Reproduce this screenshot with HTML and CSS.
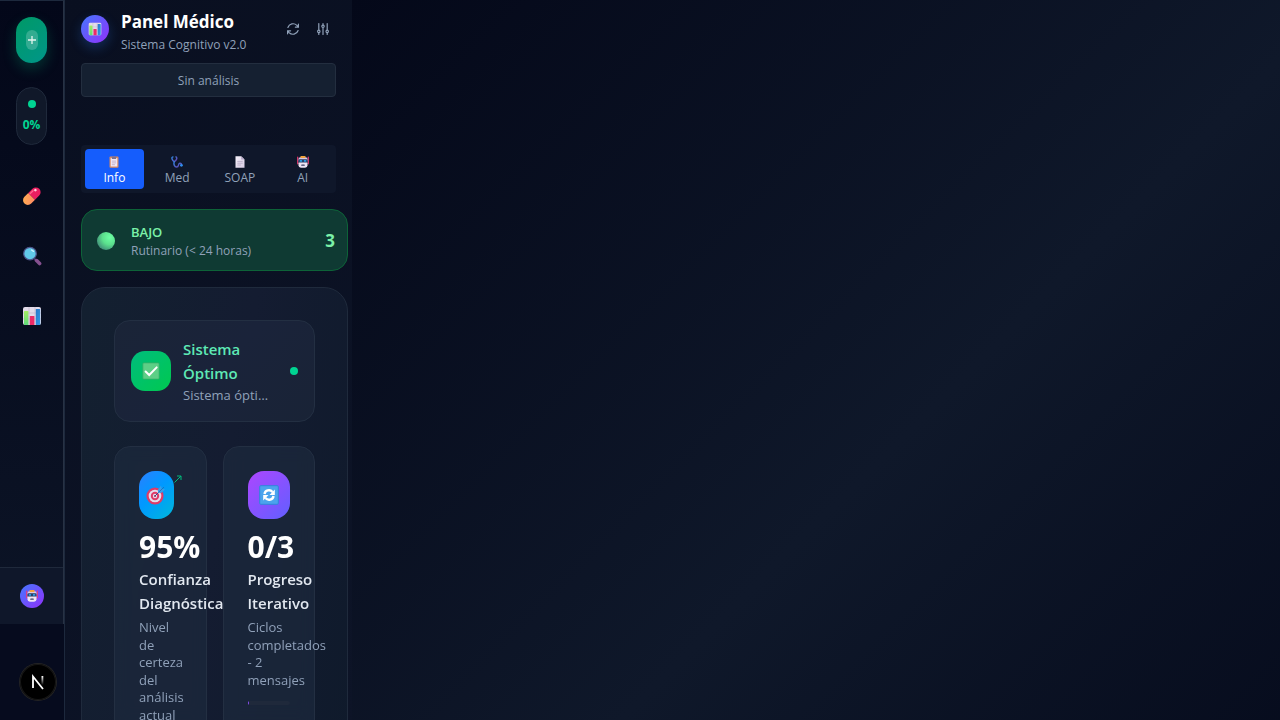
FILE: index.html
```html
<!DOCTYPE html>
<html lang="es">
<head>
<meta charset="utf-8">
<meta name="viewport" content="width=device-width, initial-scale=1">
<title>Panel Médico</title>
<link rel="stylesheet" href="styles.css">
</head>
<body>
<svg class="sprite" aria-hidden="true">
  <defs>
    <linearGradient id="g-green" x1="0" y1="0" x2="0" y2="1"><stop offset="0" stop-color="#a5ee62"/><stop offset="1" stop-color="#5edb7a"/></linearGradient>
    <linearGradient id="g-blue" x1="0" y1="0" x2="1" y2="1"><stop offset="0" stop-color="#2a78c8"/><stop offset="1" stop-color="#2f9be8"/></linearGradient>
    <linearGradient id="g-orange" x1="0" y1="0" x2="1" y2="1"><stop offset="0" stop-color="#ffb04f"/><stop offset="1" stop-color="#ff8a65"/></linearGradient>
    <linearGradient id="g-paper" x1="0" y1="0" x2="1" y2="1"><stop offset="0" stop-color="#f7f2fb"/><stop offset="1" stop-color="#d6cbe2"/></linearGradient>
    <linearGradient id="g-tube" x1="0" y1="0" x2="1" y2="1"><stop offset="0" stop-color="#2f86e0"/><stop offset="1" stop-color="#6b3fae"/></linearGradient>
    <linearGradient id="g-n" x1="0" y1="0" x2="0" y2="1"><stop offset="0" stop-color="#fff"/><stop offset="1" stop-color="#fff" stop-opacity="0"/></linearGradient>
    <radialGradient id="g-ball" cx=".7" cy=".3" r=".8"><stop offset="0" stop-color="#6dffa4"/><stop offset=".5" stop-color="#5be08d"/><stop offset="1" stop-color="#3f8a78"/></radialGradient>
  </defs>
  <symbol id="chart" viewBox="0 0 20 20">
    <rect x="1" y="1" width="18" height="18" rx="2" fill="#e3dcea"/>
    <path d="M7 1v18M13 1v18M1 7h18M1 13h18" stroke="#c4b9cf" stroke-width=".7"/>
    <rect x="2" y="5" width="4.4" height="14" rx=".6" fill="url(#g-green)"/>
    <rect x="7.8" y="10" width="4.6" height="9" rx=".6" fill="#ec2b68"/>
    <rect x="13.8" y="3" width="4.4" height="16" rx=".6" fill="url(#g-blue)"/>
  </symbol>
  <symbol id="robot" viewBox="0 0 20 20">
    <path d="M1.200 2v11M18.800 2v11" stroke="#e93b72" stroke-width="2" stroke-linecap="round"/>
    <path d="M2.500 5q0-3 3-3h9q3 0 3 3v4h-15z" fill="#d7c8e4"/>
    <rect x="5.500" y="0" width="9" height="3.500" rx="1.700" fill="#f2a33c"/>
    <rect x="2.500" y="8" width="15" height="11.500" rx="4" fill="#eee4f4"/>
    <rect x="2.500" y="5.500" width="15" height="5.500" rx="2" fill="#293a61"/>
    <rect x="4.500" y="6.500" width="4" height="3.200" rx="1" fill="#2d9fe6"/><rect x="11.500" y="6.500" width="4" height="3.200" rx="1" fill="#2d9fe6"/>
    <rect x="7" y="14" width="6" height="2.300" rx="1" fill="#3a3e61"/>
  </symbol>
  <symbol id="pill" viewBox="0 0 20 20">
    <g transform="rotate(-45 10 10)">
      <path d="M10 5.200H4.600a4.800 4.800 0 0 0 0 9.600H10z" fill="url(#g-orange)" transform="translate(-.5 0)"/>
      <path d="M9.500 5.200h5.900a4.800 4.800 0 0 1 0 9.600H9.500z" fill="#e91f60"/>
      <path d="M10 7h4.500" stroke="#ff6a93" stroke-width="1.300" stroke-linecap="round"/>
      <circle cx="16.500" cy="8.300" r="1.300" fill="#ffd1df"/>
    </g>
  </symbol>
  <symbol id="lens" viewBox="0 0 20 20">
    <path d="M12.600 13l1.600 1.400" stroke="#564779" stroke-width="2"/>
    <path d="M14.600 14.600l3 3" stroke="#85508f" stroke-width="3.600" stroke-linecap="round"/>
    <circle cx="8" cy="7.600" r="6.300" fill="#61c9e9" stroke="#4c5389" stroke-width="1.300"/>
    <path d="M9.500 4l2 1.400" stroke="#c9f3ff" stroke-width="1.300" stroke-linecap="round"/>
  </symbol>
  <symbol id="clipboard" viewBox="0 0 20 20">
    <rect x="2.500" y="1" width="15" height="18.500" rx="1.500" fill="#d98a60"/>
    <rect x="4.500" y="3.500" width="11" height="14" fill="#efe7f5"/>
    <path d="M6.500 1h7v4h-7z" fill="#7b718e"/>
    <path d="M6.500 8.500h7M6.500 11.500h7M6.500 14.500h5" stroke="#ac9cba" stroke-width="1.100"/>
  </symbol>
  <symbol id="stetho" viewBox="0 0 20 20">
    <g fill="none" stroke="url(#g-tube)" stroke-width="2.400" stroke-linecap="round">
      <path d="M3.200 1.500C0 2 2 7.500 5.300 9.500 9 8 11 3 8.300 1.500"/>
      <path d="M5.300 9.500C4 14 6 18.500 9.300 18.400c4.500 0 2-5.700 5.400-6.300 2-.3 2.800 1 2.800 2.200"/>
    </g>
    <circle cx="17.300" cy="15.500" r="2.300" fill="#2f8df0"/>
  </symbol>
  <symbol id="doc" viewBox="0 0 20 20">
    <path d="M2.500 .5h9.500l5.500 5.500v13.500h-15z" fill="url(#g-paper)"/>
    <path d="M12 .5l5.500 5.500H12z" fill="#b6a8c6"/>
    <path d="M5.500 9h9M5.500 12h9M5.500 15h6" stroke="#a99ab8" stroke-width="1.100"/>
  </symbol>
  <symbol id="check" viewBox="0 0 20 20">
    <rect x="1" y="1" width="18" height="18" rx="1" fill="#5dcf86" stroke="#3cab68" stroke-width=".8"/>
    <path d="M4 10.500l4 4L16.300 6" fill="none" stroke="#fff" stroke-width="2.200" stroke-linecap="round"/>
  </symbol>
  <symbol id="target" viewBox="0 0 20 20">
    <circle cx="9" cy="11" r="8.600" fill="#df3b68"/><circle cx="9" cy="11" r="6.300" fill="#e6dcec"/>
    <circle cx="9" cy="11" r="4.200" fill="#df3b68"/><circle cx="9" cy="11" r="2.200" fill="#e6dcec"/><circle cx="9" cy="11" r="1" fill="#a22a53"/>
    <path d="M9 11l5-5" stroke="#304d91" stroke-width="1"/>
    <path d="M12 8V4.500L15 .8l.7 2.800 3.300.8-3.500 3.400z" fill="#3b9de8"/><path d="M12.500 7.500L18 2" stroke="#1d68b6" stroke-width=".8"/>
  </symbol>
  <symbol id="cycle" viewBox="0 0 20 20">
    <rect x=".7" y=".7" width="18.600" height="18.600" rx="1" fill="#4ba3ed" stroke="#3185db" stroke-width="1"/>
    <path d="M5.500 9C6 5.200 11 4 13.500 7" fill="none" stroke="#fff" stroke-width="2.400"/><path d="M15.800 4.500V10h-5.300z" fill="#fff"/>
    <path d="M14.500 11C14 14.800 9 16 6.500 13" fill="none" stroke="#fff" stroke-width="2.400"/><path d="M4.200 15.500V10h5.300z" fill="#fff"/>
  </symbol>
</svg>

<div class="app">
  <aside class="rail" aria-label="Accesos">
    <div class="rail-main">
      <button class="new-chat" aria-label="Nueva consulta"><span class="new-chat-icon"><svg viewBox="0 0 10 10"><path d="M5 1v8M1 5h8" stroke="currentColor" stroke-width="1.300"/></svg></span></button>
      <div class="score"><span class="dot"></span><span>0%</span></div>
      <nav class="rail-nav">
        <button aria-label="Medicación"><svg><use href="#pill"/></svg></button>
        <button aria-label="Buscar"><svg><use href="#lens"/></svg></button>
        <button aria-label="Estadísticas"><svg><use href="#chart"/></svg></button>
      </nav>
    </div>
    <div class="rail-footer"><span class="avatar avatar-small"><svg><use href="#robot"/></svg></span></div>
  </aside>

  <section class="panel">
    <header class="panel-header">
      <span class="avatar"><svg><use href="#chart"/></svg></span>
      <div class="heading">
        <h1>Panel Médico</h1>
        <p>Sistema Cognitivo v2.0</p>
      </div>
      <div class="tools">
        <button aria-label="Actualizar"><svg viewBox="2 2 20 20"><path d="M16 9h5V4M3 20v-5h5M3.500 9.500a9 9 0 0 1 15-3.500L21 9M3 15l2.500 3a9 9 0 0 0 15-3.500"/></svg></button>
        <button aria-label="Ajustes"><svg viewBox="2 2 20 20"><path d="M5 3v10M5 19v2M12 10v11M12 3v2M19 3v10M19 19v2"/><circle cx="5" cy="16" r="2"/><circle cx="12" cy="7.500" r="2"/><circle cx="19" cy="16" r="2"/></svg></button>
      </div>
    </header>
    <button class="analysis">Sin análisis</button>

    <nav class="tabs">
      <button class="active"><svg><use href="#clipboard"/></svg>Info</button>
      <button><svg><use href="#stetho"/></svg>Med</button>
      <button><svg><use href="#doc"/></svg>SOAP</button>
      <button><svg><use href="#robot"/></svg>AI</button>
    </nav>

    <div class="content">
      <article class="urgency">
        <svg viewBox="0 0 18 18"><circle cx="9" cy="9" r="9" fill="url(#g-ball)"/></svg>
        <div class="urgency-text"><h2>BAJO</h2><p>Rutinario (&lt; 24 horas)</p></div>
        <strong>3</strong>
      </article>

      <section class="overview">
        <article class="status">
          <span class="status-icon"><svg><use href="#check"/></svg></span>
          <div class="status-text"><h2>Sistema Óptimo</h2><p>Sistema óptimo</p></div>
          <span class="dot"></span>
        </article>
        <div class="metrics">
          <article class="metric">
            <div class="metric-top"><span class="metric-icon blue"><svg><use href="#target"/></svg></span><svg class="trend" viewBox="0 0 8 8"><path d="M.5 7.500L7 1M3 1h4v4"/></svg></div>
            <strong>95%</strong>
            <h3>Confianza Diagnóstica</h3>
            <p>Nivel de certeza del análisis actual</p>
          </article>
          <article class="metric">
            <div class="metric-top"><span class="metric-icon violet"><svg><use href="#cycle"/></svg></span></div>
            <strong>0/3</strong>
            <h3>Progreso Iterativo</h3>
            <p>Ciclos completados - 2 mensajes</p>
            <div class="progress"><span></span></div>
          </article>
        </div>
      </section>
    </div>
  </section>

  <main class="stage"></main>
</div>

<button class="dev-badge" aria-label="Herramientas"><svg viewBox="0 0 36 36"><path d="M13 24V12.500L23 25" fill="none" stroke="#fff" stroke-width="1.800"/><rect x="21.500" y="12" width="1.800" height="9" fill="url(#g-n)"/></svg></button>
</body>
</html>
```
FILE: styles.css
```css
* { box-sizing: border-box; }
body {
  margin: 0;
  background: #020617;
  color: #90a1b9;
  font-family: "Open Sans", "Noto Sans", sans-serif;
  font-size: 12px;
  line-height: 16px;
}
h1, h2, h3, p { margin: 0; }
button {
  padding: 0;
  border: 0;
  background: none;
  color: inherit;
  font: inherit;
  cursor: pointer;
}
svg { display: block; }
.sprite { position: absolute; width: 0; height: 0; }
.dot { flex: none; width: 8px; height: 8px; border-radius: 50%; background: #00d492; }

.app {
  display: flex;
  height: 100vh;
  overflow: hidden;
}

/* Icon rail */
.rail {
  flex: none;
  display: flex;
  flex-direction: column;
  width: 64px;
  height: calc(100vh - 96px);
  border-top: 1px solid #1d293d;
  border-right: 1px solid #283244;
  background: linear-gradient(#030719, #0c1426);
  box-shadow: 0 96px 0 #060b1e;
}
.rail-main { flex: 1; padding: 16px; }
.new-chat {
  display: flex;
  align-items: center;
  justify-content: center;
  width: 100%;
  height: 46px;
  border-radius: 16px;
  background: linear-gradient(135deg, #009966, #009689);
  box-shadow: 0 6px 14px rgba(0, 188, 125, .24);
}
.new-chat-icon {
  display: grid;
  place-items: center;
  width: 12px;
  height: 20px;
  border-radius: 6px;
  background: rgba(255, 255, 255, .2);
  color: #e6f5ef;
}
.new-chat-icon svg { width: 10px; height: 10px; }
.score {
  display: flex;
  flex-direction: column;
  align-items: center;
  gap: 9px;
  margin-top: 24px;
  padding: 12px 0 11px;
  border: 1px solid #1f293b;
  border-radius: 16px;
  background: #101829;
  color: #00d492;
  font-weight: 700;
}
.rail-nav { display: grid; gap: 16px; margin-top: 29px; }
.rail-nav button { display: grid; place-items: center; height: 44px; }
.rail-nav svg { width: 20px; height: 20px; }
.rail-footer {
  display: grid;
  place-items: center;
  padding: 16px 0;
  border-top: 1px solid #1f293b;
  background: #0f172a;
}
.avatar {
  flex: none;
  display: grid;
  place-items: center;
  width: 28px;
  height: 28px;
  border-radius: 50%;
  background: linear-gradient(135deg, #4478ff, #9130fa);
  box-shadow: 0 5px 12px rgba(43, 127, 255, .25);
}
.avatar svg { width: 14px; height: 14px; }
.avatar-small { width: 24px; height: 24px; box-shadow: none; }
.avatar-small svg { width: 12px; height: 12px; }

/* Medical panel */
.panel {
  flex: none;
  width: 288px;
  border-left: 1px solid #1d293d;
  background: linear-gradient(135deg, #090f20, #0d1427);
  overflow: hidden;
}
.panel-header { display: flex; align-items: center; gap: 12px; padding: 8px 15px 0 16px; }
.panel-header .avatar, .tools { margin-bottom: 4px; }
.heading { flex: 1; white-space: nowrap; }
.heading h1 { color: #fff; font-size: 17px; line-height: 28px; font-weight: 700; }
.heading p { line-height: 18px; }
.tools { display: flex; gap: 2px; }
.tools button { display: grid; place-items: center; width: 28px; height: 28px; }
.tools svg { width: 12px; height: 12px; fill: none; stroke: #90a1b9; stroke-width: 2; stroke-linecap: round; }
.analysis {
  display: block;
  width: calc(100% - 32px);
  height: 34px;
  margin: 9px 16px 48px;
  padding-top: 2px;
  border: 1px solid #232e3f;
  border-radius: 4px;
  background: #152031;
}
.tabs {
  display: grid;
  grid-template-columns: repeat(4, 1fr);
  gap: 4px;
  margin: 0 16px 16px;
  padding: 4px;
  border-radius: 4px;
  background: #0f172a;
}
.tabs button { display: grid; justify-items: center; padding: 7px 0 3px; border-radius: 4px; }
.tabs svg { width: 12px; height: 12px; margin-bottom: 2px; }
.tabs .active { background: #155dfc; color: #fff; }
.content {
  display: grid;
  grid-template-columns: minmax(0, 1fr);
  gap: 16px;
  padding: 0 4px 0 16px;
}
.urgency {
  display: flex;
  align-items: center;
  padding: 12px 12px 10px 15px;
  border: 1px solid #0d6338;
  border-radius: 16px;
  background: #0f3a33;
}
.urgency svg { width: 18px; height: 18px; margin-right: 16px; }
.urgency-text { flex: 1; }
.urgency h2 { color: #7bf1a8; font-size: 13px; line-height: 20px; font-weight: 600; }
.urgency p { line-height: 18px; }
.urgency strong { color: #7bf1a8; font-size: 17px; }
.overview {
  padding: 32px;
  border: 1px solid #1f2a3c;
  border-radius: 24px;
  background: linear-gradient(100deg, #132030, #141c31 50%, #0f1a2b);
}
.status {
  display: flex;
  align-items: center;
  gap: 12px;
  padding: 16px;
  border: 1px solid #232f42;
  border-radius: 16px;
  background: linear-gradient(135deg, #1a2437, #1a233a 50%, #192336);
}
.status-icon {
  flex: none;
  display: grid;
  place-items: center;
  width: 40px;
  height: 40px;
  border-radius: 14px;
  background: linear-gradient(135deg, #00bc7d, #00c950);
}
.status-icon svg { width: 18px; height: 18px; }
.status-text { flex: 1; min-width: 0; padding-right: 4px; }
.status h2 { color: #5ee9b5; font-size: 15px; line-height: 24px; font-weight: 600; }
.status p { overflow: hidden; font-size: 13px; line-height: 20px; white-space: nowrap; text-overflow: ellipsis; }
.metrics { display: grid; grid-template-columns: repeat(2, minmax(0, 1fr)); gap: 16px; margin-top: 24px; }
.metric {
  min-width: 0;
  padding: 24px;
  border: 1px solid #232f42;
  border-radius: 16px;
  background: rgba(29, 41, 61, .7);
  backdrop-filter: blur(8px);
}
.metric-top { display: flex; margin-bottom: 12px; }
.metric-icon { flex: 1; display: grid; place-items: center; height: 48px; border-radius: 16px; }
.metric-icon svg { width: 20px; height: 20px; }
.blue { background: linear-gradient(135deg, #2b7fff, #0099ff 45%, #00b8db); }
.violet { background: linear-gradient(135deg, #ad46ff, #615fff); }
.trend { flex: none; width: 8px; height: 8px; margin-top: 4px; fill: none; stroke: #00bc7d; }
.metric strong { display: block; margin-bottom: 4px; color: #fff; font-size: 30px; line-height: 32px; font-weight: 700; }
.metric h3 { margin-bottom: 4px; color: #e2e8f0; font-size: 15px; line-height: 24px; font-weight: 600; }
.metric p { font-size: 13px; line-height: 1.35; }
.progress { height: 4px; margin-top: 12px; border-radius: 2px; background: #1f293b; overflow: hidden; }
.progress span { display: block; width: 1px; height: 100%; background: #8e51ff; }

.stage { flex: 1; min-width: 0; background: linear-gradient(135deg, #040819, #0f182a 60%, #030718 120%); }

.dev-badge {
  position: fixed;
  left: 20px;
  bottom: 20px;
  width: 36px;
  height: 36px;
  border-radius: 50%;
  background: #000;
  box-shadow: 0 0 0 1px #242424, inset 0 0 0 1px #171717;
}
```
